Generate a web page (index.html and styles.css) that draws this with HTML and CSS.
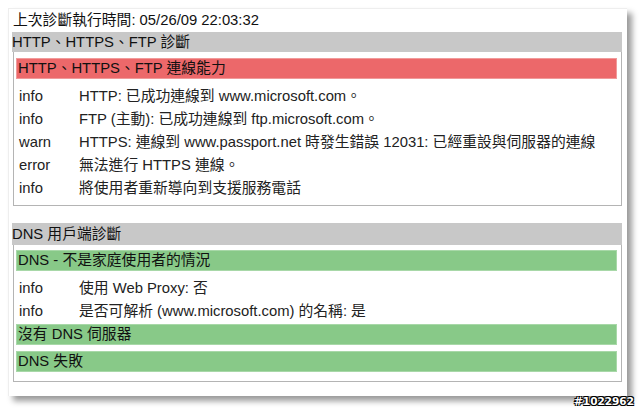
FILE: index.html
```html
<!DOCTYPE html>
<html lang="zh-Hant">
<head>
  <meta charset="UTF-8" />
  <title>診斷報告</title>
  <link rel="stylesheet" href="styles.css">
</head>
<body>
  <div class="ventana">
    <p class="ultima">上次診斷執行時間: 05/26/09 22:03:32</p>

    <div class="seccion">
      <div class="cabecera">HTTP、HTTPS、FTP 診斷</div>
      <div class="caja">
        <div class="barra roja">HTTP、HTTPS、FTP 連線能力</div>
        <div class="filas">
          <div class="fila"><span class="nivel">info</span><span>HTTP: 已成功連線到 www.microsoft.com。</span></div>
          <div class="fila"><span class="nivel">info</span><span>FTP (主動): 已成功連線到 ftp.microsoft.com。</span></div>
          <div class="fila"><span class="nivel">warn</span><span>HTTPS: 連線到 www.passport.net 時發生錯誤 12031: 已經重設與伺服器的連線</span></div>
          <div class="fila"><span class="nivel">error</span><span>無法進行 HTTPS 連線。</span></div>
          <div class="fila"><span class="nivel">info</span><span>將使用者重新導向到支援服務電話</span></div>
        </div>
      </div>
    </div>

    <div class="seccion dns">
      <div class="cabecera">DNS 用戶端診斷</div>
      <div class="caja">
        <div class="barra verde">DNS - 不是家庭使用者的情況</div>
        <div class="filas">
          <div class="fila"><span class="nivel">info</span><span>使用 Web Proxy: 否</span></div>
          <div class="fila"><span class="nivel">info</span><span>是否可解析 (www.microsoft.com) 的名稱: 是</span></div>
        </div>
        <div class="barra verde">沒有 DNS 伺服器</div>
        <div class="barra verde">DNS 失敗</div>
      </div>
    </div>
  </div>

  <div class="marca">#1022962</div>
</body>
</html>
```

FILE: styles.css
```css
body {
  margin: 0;
  background-color: #fff;
  font-family: 'Liberation Sans', 'Noto Sans CJK TC', sans-serif;
  font-size: 14.8px;
  color: #222;
  width: 640px;
  height: 409px;
  overflow: hidden;
  position: relative;
}

.ventana {
  margin: 8px 0 0 8px;
  width: 619px;
  height: 388px;
  box-sizing: border-box;
  padding: 0 5px 0 3px;
  background-color: #fff;
  border-top: 1px solid #eee;
  border-left: 1px solid #eee;
  box-shadow: 5px 5px 6px rgba(0,0,0,0.4);
}

.ultima {
  margin: 0;
  padding-left: 1px;
  height: 23px;
  line-height: 23px;
  color: #111;
}

.cabecera {
  background-color: #c8c8c8;
  height: 20px;
  line-height: 20px;
  color: #111;
}

.caja {
  margin-left: 1px;
  border: 1px solid #b4b4b4;
  border-top: none;
  padding: 6px 4px 4px 2px;
}

.barra {
  height: 19px;
  line-height: 19px;
  padding-left: 1px;
  color: #111;
}

.roja {
  background-color: #ec686a;
  border: 1px solid #f09a9a;
}

.verde {
  background-color: #88c988;
  border: 1px solid #a8d8a8;
}

.filas {
  padding: 6px 0 1px 3px;
}

.fila {
  height: 23px;
  line-height: 23px;
  display: flex;
}

.nivel {
  width: 60px;
  flex-shrink: 0;
}

.dns {
  margin-top: 17px;
}

.dns .cabecera {
  height: 22px;
  line-height: 22px;
}

.dns .caja {
  padding-top: 5px;
  padding-bottom: 9px;
}

.dns .barra + .barra {
  margin-top: 6px;
}

.marca {
  position: absolute;
  right: 6px;
  bottom: 2px;
  font-family: 'DejaVu Sans', sans-serif;
  font-size: 10.5px;
  font-weight: bold;
  color: #fff;
  text-shadow: -1px -1px 0 #000, 1px -1px 0 #000, -1px 1px 0 #000, 1px 1px 0 #000;
}
```
